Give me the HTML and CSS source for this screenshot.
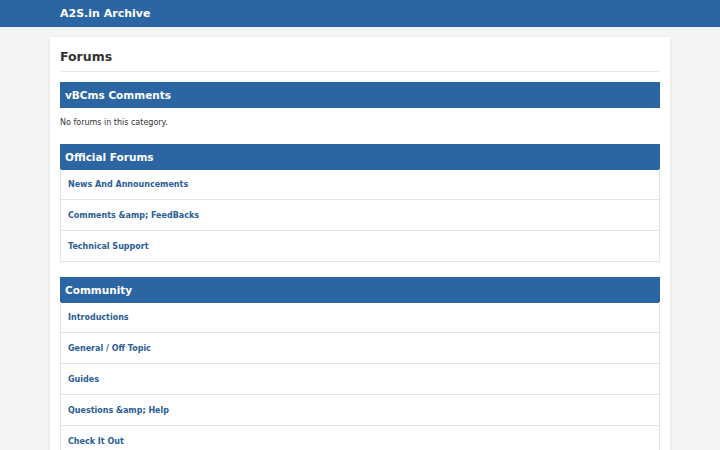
FILE: index.html
```html
<!DOCTYPE html>
<html>
<head>
  <title>A2S.in Archive - Forums</title>
  <link rel="stylesheet" href="styles.css">
</head>
<body>
<div id="topbar">
  <div class="wrap"><a href="#" class="brand">A2S.in Archive</a></div>
</div>
<div id="page">
  <h1 class="page-title">Forums</h1>

  <div class="category">
    <h2 class="cat-head">vBCms Comments</h2>
    <p class="empty">No forums in this category.</p>
  </div>

  <div class="category">
    <h2 class="cat-head">Official Forums</h2>
    <ul class="forums">
      <li><a href="#">News And Announcements</a></li>
      <li><a href="#">Comments &amp;amp; FeedBacks</a></li>
      <li><a href="#">Technical Support</a></li>
    </ul>
  </div>

  <div class="category">
    <h2 class="cat-head">Community</h2>
    <ul class="forums">
      <li><a href="#">Introductions</a></li>
      <li><a href="#">General / Off Topic</a></li>
      <li><a href="#">Guides</a></li>
      <li><a href="#">Questions &amp;amp; Help</a></li>
      <li><a href="#">Check It Out</a></li>
    </ul>
  </div>
</div>
</body>
</html>
```

FILE: styles.css
```css
body {
  margin: 0;
  padding: 0;
  background: #f4f4f4;
  color: #333;
  font-family: "DejaVu Sans", Verdana, sans-serif;
}
a {
  text-decoration: none;
}
#topbar {
  background: #2b65a4;
  height: 27px;
}
#topbar .wrap {
  width: 600px;
  margin: 0 auto;
  padding: 0 10px;
}
.brand {
  display: block;
  color: #fff;
  font-weight: bold;
  font-size: 11px;
  line-height: 27px;
}
#page {
  width: 600px;
  margin: 10px auto 0;
  padding: 0 10px 10px;
  background: #fff;
  box-shadow: 0 1px 3px rgba(0, 0, 0, 0.12);
}
.page-title {
  margin: 0 0 10px;
  padding: 10px 0 0;
  height: 24px;
  line-height: 20px;
  font-size: 12.5px;
  border-bottom: 1px solid #e8e8e8;
}
.category {
  margin-bottom: 15px;
}
.cat-head {
  margin: 0;
  padding: 0 5px;
  height: 26px;
  line-height: 27px;
  background: #2b65a4;
  color: #fff;
  font-size: 10.5px;
}
.empty {
  margin: 0;
  padding: 9px 0 0;
  line-height: 12px;
  font-size: 8px;
}
.forums {
  list-style: none;
  margin: -1px 0 0;
  padding: 0;
  border: 1px solid #e3e3e3;
  border-top: 0;
}
.forums li {
  border-bottom: 1px solid #e3e3e3;
}
.forums li:last-child {
  border-bottom: 0;
}
.forums a {
  display: block;
  padding: 2px 7px 0;
  line-height: 28px;
  color: #2a5d95;
  font-weight: bold;
  font-size: 8px;
}
```
